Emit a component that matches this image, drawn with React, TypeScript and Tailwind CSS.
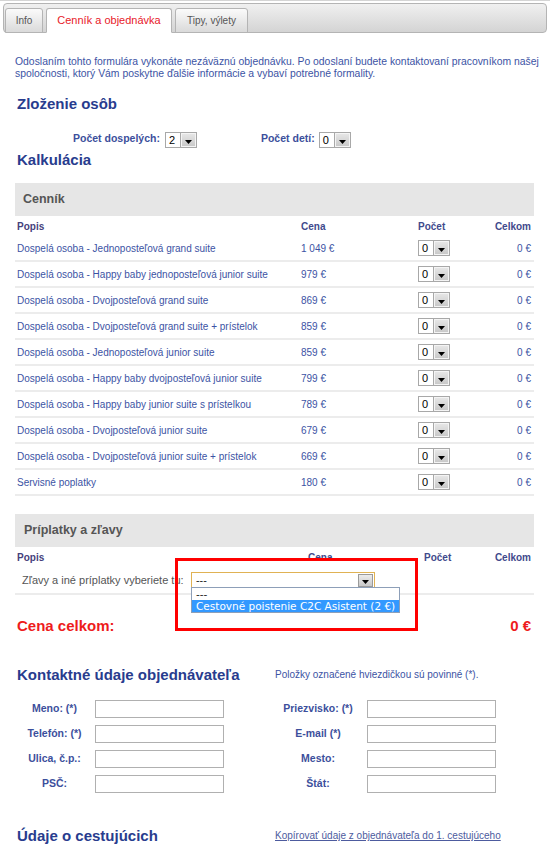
import React from "react";

const rows: [string, string][] = [
  ["Dospelá osoba - Jednoposteľová grand suite", "1 049 €"],
  ["Dospelá osoba - Happy baby jednoposteľová junior suite", "979 €"],
  ["Dospelá osoba - Dvojposteľová grand suite", "869 €"],
  ["Dospelá osoba - Dvojposteľová grand suite + prístelok", "859 €"],
  ["Dospelá osoba - Jednoposteľová junior suite", "859 €"],
  ["Dospelá osoba - Happy baby dvojposteľová junior suite", "799 €"],
  ["Dospelá osoba - Happy baby junior suite s prístelkou", "789 €"],
  ["Dospelá osoba - Dvojposteľová junior suite", "679 €"],
  ["Dospelá osoba - Dvojposteľová junior suite + prístelok", "669 €"],
  ["Servisné poplatky", "180 €"],
];

function Arrow() {
  return (
    <svg width="7" height="4" viewBox="0 0 7 4" className="mt-[3px]">
      <path d="M0 0h7L3.5 4z" fill="#000" />
    </svg>
  );
}

function Sel({ value }: { value: string }) {
  return (
    <div className="inline-flex h-[16px] w-[32px] border border-[#a8a8a8] bg-white">
      <span className="flex-1 pl-[3px] text-[11px] leading-[14px] text-black">{value}</span>
      <span className="flex w-[15px] items-center justify-center border border-[#f4f4f4] bg-gradient-to-b from-[#e6e6e6] to-[#c9c9c9] outline outline-1 outline-[#a8a8a8]">
        <Arrow />
      </span>
    </div>
  );
}

const formRows: [string, string][] = [
  ["Meno: (*)", "Priezvisko: (*)"],
  ["Telefón: (*)", "E-mail (*)"],
  ["Ulica, č.p.:", "Mesto:"],
  ["PSČ:", "Štát:"],
];

export default function App() {
  return (
    <div className="min-h-[860px] w-[550px] border-t border-[#d4d4d4] bg-white font-['Liberation_Sans',Arial,sans-serif]">
      {/* Tabs */}
      <div className="mx-[3px] mt-[2px] h-[30px] rounded-[4px] border border-[#b4b4b4] bg-gradient-to-b from-[#f0f0f0] to-[#d4d4d4]">
        <div className="flex h-full items-end gap-[3px] pl-[1px]">
          <div className="mb-[-1px] flex h-[25px] w-[38px] items-center justify-center rounded-t-[3px] border border-[#b4b4b4] bg-gradient-to-b from-[#fbfbfb] to-[#dadada] text-[10px] text-[#555]">
            Info
          </div>
          <div className="mb-[-1px] flex h-[25px] w-[126px] items-center justify-center rounded-t-[3px] border border-b-white border-[#b4b4b4] bg-white text-[11px] text-[#e8202a]">
            Cenník a objednávka
          </div>
          <div className="mb-[-1px] flex h-[25px] w-[73px] items-center justify-center rounded-t-[3px] border border-[#b4b4b4] bg-gradient-to-b from-[#fbfbfb] to-[#dadada] text-[10px] text-[#555]">
            Tipy, výlety
          </div>
        </div>
      </div>

      <div className="pl-[15px] pr-[16px]">
        <p className="mt-[23px] whitespace-nowrap text-[10.4px] leading-[12px] text-[#3c53a4]">
          Odoslaním tohto formulára vykonáte nezáväznú objednávku. Po odoslaní budete kontaktovaní pracovníkom našej
          <br />
          spoločnosti, ktorý Vám poskytne ďalšie informácie a vybaví potrebné formality.
        </p>

        <h2 className="mt-[15px] pl-[2px] text-[15px] font-bold leading-[18px] text-[#283c8e]">Zloženie osôb</h2>

        <div className="mt-[18px] flex h-[16px] items-center pl-[58px]">
          <span className="text-[10.5px] font-bold text-[#3c4f9c]">Počet dospelých:</span>
          <span className="ml-[5px]">
            <Sel value="2" />
          </span>
          <span className="ml-[64px] text-[10.5px] font-bold text-[#3c4f9c]">Počet detí:</span>
          <span className="ml-[4px]">
            <Sel value="0" />
          </span>
        </div>

        <h2 className="mt-[4px] pl-[2px] text-[15px] font-bold leading-[18px] text-[#283c8e]">Kalkulácia</h2>

        {/* Cennik */}
        <div className="mt-[14px] flex h-[33px] items-center bg-[#e6e6e6] pl-[8px] text-[12.5px] font-bold text-[#555]">
          Cenník
        </div>
        <div className="grid h-[20px] grid-cols-[284px_117px_1fr_auto] items-center px-[2px] pr-[3px] text-[10px] font-bold text-[#3f4a8c]">
          <span className="text-[#463f7c]">Popis</span>
          <span>Cena</span>
          <span>Počet</span>
          <span>Celkom</span>
        </div>
        {rows.map(([name, price]) => (
          <div
            key={name}
            className="grid h-[26px] grid-cols-[284px_117px_1fr_auto] items-center border-b-2 border-[#ececec] px-[2px] pr-[3px] text-[10px] text-[#3c53a4]"
          >
            <span>{name}</span>
            <span>{price}</span>
            <span className="flex">
              <Sel value="0" />
            </span>
            <span>0 €</span>
          </div>
        ))}

        {/* Priplatky */}
        <div className="relative mt-[18px]">
          <div className="flex h-[33px] items-center bg-[#e6e6e6] pl-[9px] text-[12.5px] font-bold text-[#555]">
            Príplatky a zľavy
          </div>
          <div className="grid h-[21px] grid-cols-[291px_116px_1fr_auto] items-center px-[2px] pr-[3px] text-[10px] font-bold text-[#3f4a8c]">
            <span className="text-[#463f7c]">Popis</span>
            <span>Cena</span>
            <span>Počet</span>
            <span>Celkom</span>
          </div>
          <div className="flex h-[27px] items-center border-b-2 border-[#ececec] pl-[7px]">
            <span className="w-[169px] whitespace-nowrap text-[11px] text-[#555]">Zľavy a iné príplatky vyberiete tu:</span>
            <div className="relative flex h-[17px] w-[184px] border border-[#e0b253] bg-white">
              <span className="flex-1 pl-[4px] font-['DejaVu_Sans',Verdana,sans-serif] text-[10px] leading-[15px] text-[#222]">---</span>
              <span className="my-[1px] mr-[1px] flex w-[15px] items-center justify-center border border-[#9a9a9a] bg-gradient-to-b from-[#ececec] to-[#c8c8c8]">
                <Arrow />
              </span>
              <div className="absolute left-[-1px] top-[14px] z-10 w-[209px] border border-[#8d9fb8] bg-white font-['DejaVu_Sans',Verdana,sans-serif] text-[10.5px] leading-[12px]">
                <div className="pl-[4px] text-[#222]">---</div>
                <div className="whitespace-nowrap bg-[#3399ff] pl-[4px] text-white">Cestovné poistenie C2C Asistent (2 €)</div>
              </div>
            </div>
          </div>
          {/* annotation */}
          <div className="pointer-events-none absolute left-[160px] top-[44px] z-20 h-[73px] w-[243px] border-[3px] border-[#ff0000]" />
        </div>

        <div className="mt-[22px] flex justify-between pl-[2px] pr-[3px] text-[15px] font-bold leading-[18px] text-[#ee1c1c]">
          <span>Cena celkom:</span>
          <span>0 €</span>
        </div>

        {/* Kontakt */}
        <div className="mt-[31px] flex items-end">
          <h2 className="w-[260px] pl-[2px] text-[15px] font-bold leading-[18px] text-[#283c8e]">Kontaktné údaje objednávateľa</h2>
          <span className="pb-[2px] text-[10px] text-[#3c53a4]">Položky označené hviezdičkou sú povinné (*).</span>
        </div>

        <div className="mt-[16px] flex flex-col gap-[7px]">
          {formRows.map(([l, r]) => (
            <div key={l} className="flex h-[18px] items-center">
              <span className="w-[79px] text-center text-[10.5px] font-bold text-[#3c4f9c]">{l}</span>
              <input className="ml-[1px] h-[18px] w-[129px] border border-[#b0b0b0] bg-white" />
              <span className="ml-[56px] w-[76px] text-center text-[10.5px] font-bold text-[#3c4f9c]">{r}</span>
              <input className="ml-[11px] h-[18px] w-[129px] border border-[#b0b0b0] bg-white" />
            </div>
          ))}
        </div>

        <div className="mt-[34px] flex items-end">
          <h2 className="w-[260px] pl-[2px] text-[15px] font-bold leading-[18px] text-[#283c8e]">Údaje o cestujúcich</h2>
          <a className="pb-[2px] text-[10px] text-[#4d5b9e] underline">Kopírovať údaje z objednávateľa do 1. cestujúceho</a>
        </div>
      </div>
    </div>
  );
}
